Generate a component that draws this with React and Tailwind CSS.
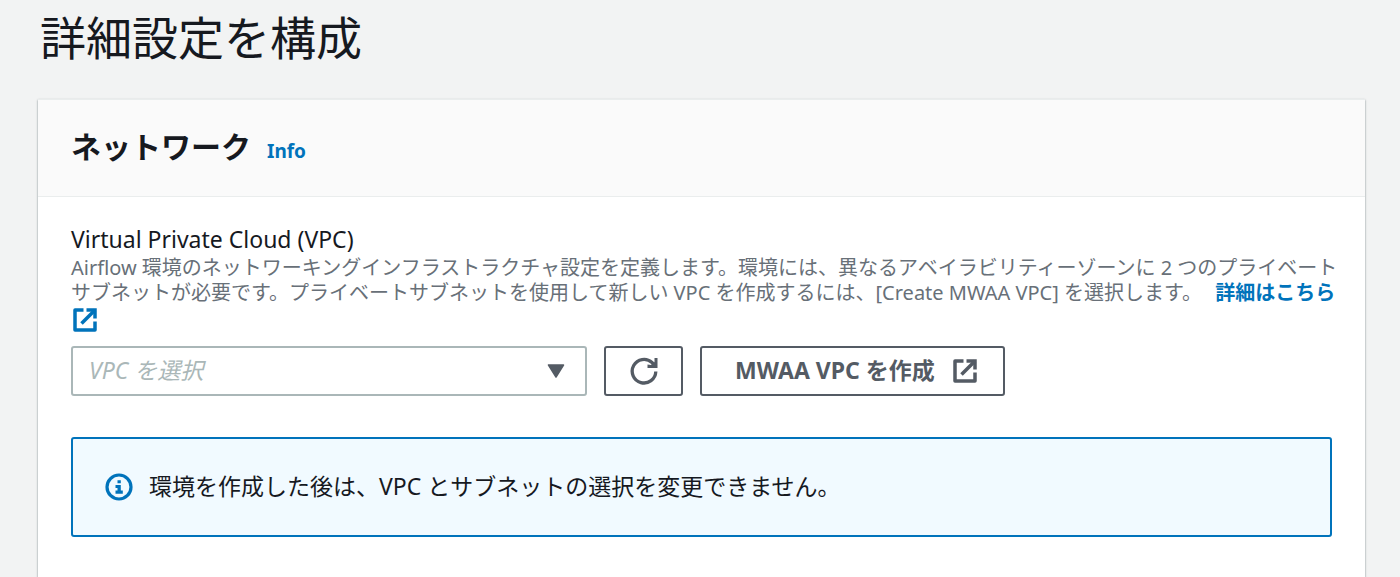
import React from "react";

function ExternalIcon({ className = "" }) {
  return (
    <svg viewBox="0 0 24 24" className={className} fill="none" stroke="currentColor" strokeWidth="3.500" aria-hidden="true">
      <path d="M10.500 2H2v20h20v-8.500" strokeLinejoin="round" />
      <path d="M13.500 2H22v8.500" />
      <path d="M22 2L8.500 15.500" />
    </svg>
  );
}

function RefreshIcon() {
  return (
    <svg viewBox="0 0 28 28" className="size-7" fill="none" stroke="currentColor" strokeWidth="3.300" aria-hidden="true">
      <path d="M25.800 14.500A11.800 11.800 0 1 1 22 5.500L24 8" />
      <path d="M27.500 1v10H17.500V7.500L21 8l3.500-3V1z" fill="currentColor" stroke="none" />
    </svg>
  );
}

function InfoIcon() {
  return (
    <svg viewBox="0 0 28 28" className="size-7 shrink-0 text-[#0073bb]" fill="none" aria-hidden="true">
      <circle cx="14" cy="14" r="12" stroke="currentColor" strokeWidth="3.200" />
      <path d="M12.500 7.200h3.300v3h-3.300zM10.500 12h5.300v5.500h2v3.200h-7.300v-3.200h2v-2.500h-2z" fill="currentColor" />
    </svg>
  );
}

export default function App() {
  return (
    <main
      lang="ja"
      className="min-h-screen bg-[#f2f3f3] px-[38px] pt-1 pr-[35px] font-['Noto_Sans','Noto_Sans_CJK_JP',sans-serif] text-[#16191f]"
    >
      <h1 className="pl-0.5 text-[46px] leading-[66px]">詳細設定を構成</h1>
      <section className="mt-[29px] min-h-[478px] border-t border-[#eaeded] bg-white shadow-[0_1px_2px_rgba(0,28,36,0.5)]">
        <header className="flex items-baseline gap-4 border-b border-[#eaeded] bg-[#fafafa] px-[33px] pt-6 pb-[26px]">
          <h2 className="text-[30px] leading-[46px] font-bold">ネットワーク</h2>
          <a href="#info" className="text-[19px] font-bold text-[#0073bb]">
            Info
          </a>
        </header>
        <div className="px-[33px] pt-[26px] pb-10">
          <label htmlFor="vpc" className="block text-[23px] leading-8">
            Virtual Private Cloud (VPC)
          </label>
          <p className="-mr-3 text-[20px] leading-[25px] text-[#687078]">
            Airflow 環境のネットワーキングインフラストラクチャ設定を定義します。環境には、異なるアベイラビリティーゾーンに 2 つのプライベートサブネットが必要です。プライベートサブネットを使用して新しい VPC を作成するには、[Create MWAA VPC] を選択します。{" "}
            <a href="#learn-more" className="ml-2 font-bold text-[#0073bb]">
              詳細はこちら <ExternalIcon className="ml-0.5 inline-block size-6" />
            </a>
          </p>
          <div className="mt-[14px] flex gap-[17px]">
            <div className="relative w-[516px]">
              <select
                id="vpc"
                defaultValue=""
                className="h-[50px] w-full appearance-none rounded-[3px] border-2 border-[#aab7b8] bg-white px-4 text-[23px] text-[#aab7b8] italic"
              >
                <option value="">VPC を選択</option>
              </select>
              <svg viewBox="0 0 18 14" className="pointer-events-none absolute top-[18px] right-[22px] h-[14px] w-[18px]" aria-hidden="true">
                <path d="M1.500 1h15L9 13z" fill="#545b64" stroke="#545b64" strokeLinejoin="round" strokeWidth="1.500" />
              </svg>
            </div>
            <button
              type="button"
              aria-label="更新"
              className="flex h-[50px] w-[79px] items-center justify-center rounded-[3px] border-2 border-[#545b64] text-[#545b64]"
            >
              <RefreshIcon />
            </button>
            <button
              type="button"
              className="flex h-[50px] items-center gap-[18px] rounded-[3px] border-2 border-[#545b64] pr-[26px] pl-[33px] text-[23px] font-bold text-[#545b64]"
            >
              MWAA VPC を作成
              <ExternalIcon className="size-6" />
            </button>
          </div>
          <div
            role="status"
            className="mt-[41px] flex h-[100px] items-center gap-4 rounded-[3px] border-2 border-[#0073bb] bg-[#f1faff] px-8 text-[23px]"
          >
            <InfoIcon />
            <span>環境を作成した後は、VPC とサブネットの選択を変更できません。</span>
          </div>
        </div>
      </section>
    </main>
  );
}
